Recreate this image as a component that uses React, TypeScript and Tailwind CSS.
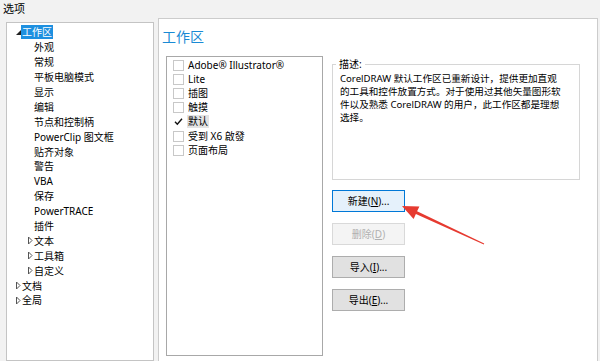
import React from "react";

type TreeItem = {
  label: string;
  level: 0 | 1;
  toggle?: "open" | "closed";
  selected?: boolean;
};

const treeItems: TreeItem[] = [
  { label: "工作区", level: 0, toggle: "open", selected: true },
  { label: "外观", level: 1 },
  { label: "常规", level: 1 },
  { label: "平板电脑模式", level: 1 },
  { label: "显示", level: 1 },
  { label: "编辑", level: 1 },
  { label: "节点和控制柄", level: 1 },
  { label: "PowerClip 图文框", level: 1 },
  { label: "贴齐对象", level: 1 },
  { label: "警告", level: 1 },
  { label: "VBA", level: 1 },
  { label: "保存", level: 1 },
  { label: "PowerTRACE", level: 1 },
  { label: "插件", level: 1 },
  { label: "文本", level: 1, toggle: "closed" },
  { label: "工具箱", level: 1, toggle: "closed" },
  { label: "自定义", level: 1, toggle: "closed" },
  { label: "文档", level: 0, toggle: "closed" },
  { label: "全局", level: 0, toggle: "closed" },
];

const workspaces = [
  { label: "Adobe® Illustrator®" },
  { label: "Lite" },
  { label: "插图" },
  { label: "触摸" },
  { label: "默认", checked: true },
  { label: "受到 X6 啟發" },
  { label: "页面布局" },
];

function Toggle({ kind }: { kind?: "open" | "closed" }) {
  if (kind === "open") {
    return (
      <svg width="7" height="7" viewBox="0 0 7 7" className="shrink-0">
        <polygon points="6,1 6,6 1,6" fill="#222" />
      </svg>
    );
  }
  if (kind === "closed") {
    return (
      <svg width="7" height="9" viewBox="0 0 7 9" className="shrink-0">
        <polygon points="1.5,1 5,4.5 1.5,8" fill="none" stroke="#555" strokeWidth="1" />
      </svg>
    );
  }
  return <span className="w-[7px] shrink-0" />;
}

function Btn({ children, variant }: { children: React.ReactNode; variant?: "hot" | "off" }) {
  const look =
    variant === "hot"
      ? "bg-[#e5f1fb] border-[#0078d7] text-black"
      : variant === "off"
      ? "bg-[#f4f4f4] border-[#d9d9d9] text-[#b0b0b0]"
      : "bg-[#e1e1e1] border-[#adadad] text-black";
  return (
    <button
      className={`h-[22px] w-[73px] border text-[10px] leading-[20px] flex items-center justify-center ${look}`}
    >
      {children}
    </button>
  );
}

export default function App() {
  return (
    <div className="relative w-[600px] h-[361px] overflow-hidden bg-[#f2f2f2] text-black font-['Noto_Sans','Noto_Sans_CJK_SC',sans-serif]">
      <div className="h-[18px] pl-[3px] pt-[1px] text-[11px] leading-[16px]">选项</div>

      <div className="flex h-[343px]">
        {/* options tree */}
        <div className="ml-[6px] mt-[4px] w-[148px] border border-[#c4c4c4] bg-white pt-[2px]">
          {treeItems.map((it) => (
            <div
              key={it.label}
              className={`flex items-center h-[14.9px] text-[10px] leading-[14px] ${
                it.level === 0 ? "pl-[8px]" : "pl-[20px]"
              }`}
            >
              <Toggle kind={it.toggle} />
              <span
                className={`ml-[-1px] px-[1px] whitespace-nowrap ${
                  it.selected ? "bg-[#1e90e0] text-white" : ""
                }`}
              >
                {it.label}
              </span>
            </div>
          ))}
        </div>

        {/* workspace page */}
        <div className="ml-[4px] w-[440px] border border-b-0 border-[#cccccc] bg-white">
          <div className="pl-[3px] pt-[9px] text-[14px] leading-[18px] text-[#1a8ad4]">工作区</div>

          <div className="flex mt-[10px] pl-[7px]">
            <div className="w-[157px] h-[300px] border border-[#a8a8a8] pt-[1px]">
              {workspaces.map((w) => (
                <div key={w.label} className="flex items-center h-[14.2px] pl-[6px] text-[10px]">
                  {w.checked ? (
                    <svg width="11" height="11" viewBox="0 0 11 11" className="shrink-0">
                      <path d="M2 5.8 L4.3 8.2 L9 2.8" fill="none" stroke="#111" strokeWidth="1.4" />
                    </svg>
                  ) : (
                    <span className="w-[11px] h-[11px] border border-[#c8c8c8] shrink-0" />
                  )}
                  <span
                    className={`ml-[3px] px-[1px] leading-[13px] whitespace-nowrap ${
                      w.checked ? "bg-[#e3e3e3]" : ""
                    }`}
                  >
                    {w.label}
                  </span>
                </div>
              ))}
            </div>

            <div className="ml-[9px] flex flex-col">
              <fieldset className="mt-[2px] w-[248px] h-[122px] border border-[#d6d6d6] pl-[7px] pt-[2px]">
                <legend className="ml-[-4px] px-[3px] text-[10px] leading-[12px]">描述:</legend>
                <div className="text-[9.6px] leading-[13px] whitespace-nowrap">
                  <div>CorelDRAW 默认工作区已重新设计，提供更加直观</div>
                  <div>的工具和控件放置方式。对于使用过其他矢量图形软</div>
                  <div>件以及熟悉 CorelDRAW 的用户，此工作区都是理想</div>
                  <div>选择。</div>
                </div>
              </fieldset>

              <div className="mt-[10px] flex flex-col gap-[11px]">
                <Btn variant="hot">
                  新建(<span className="underline">N</span>)...
                </Btn>
                <Btn variant="off">
                  删除(<span className="underline">D</span>)
                </Btn>
                <Btn>
                  导入(<span className="underline">I</span>)...
                </Btn>
                <Btn>
                  导出(<span className="underline">E</span>)...
                </Btn>
              </div>
            </div>
          </div>
        </div>
      </div>

      {/* red annotation arrow */}
      <svg className="absolute left-0 top-0 pointer-events-none" width="600" height="361" viewBox="0 0 600 361">
        <polygon
          points="402,206 419.4,206.4 417.1,211.3 484.2,243.5 483.8,244.5 415.9,214.1 413.6,219"
          fill="#e63a30"
        />
      </svg>
    </div>
  );
}
